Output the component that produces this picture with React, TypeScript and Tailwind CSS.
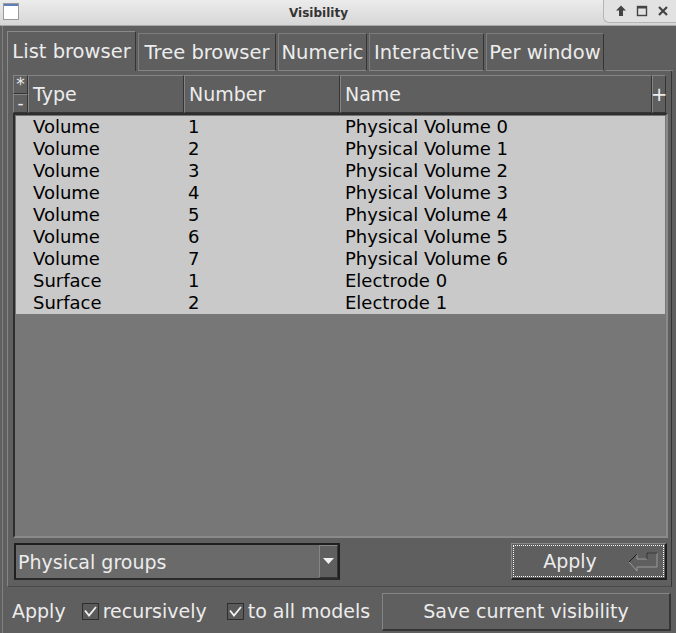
import React from "react";

const rows: [string, string, string][] = [
  ["Volume", "1", "Physical Volume 0"],
  ["Volume", "2", "Physical Volume 1"],
  ["Volume", "3", "Physical Volume 2"],
  ["Volume", "4", "Physical Volume 3"],
  ["Volume", "5", "Physical Volume 4"],
  ["Volume", "6", "Physical Volume 5"],
  ["Volume", "7", "Physical Volume 6"],
  ["Surface", "1", "Electrode 0"],
  ["Surface", "2", "Electrode 1"],
];

const tabs = [
  { label: "List browser", w: "w-[129px]" },
  { label: "Tree browser", w: "w-[138px]" },
  { label: "Numeric", w: "w-[89px]" },
  { label: "Interactive", w: "w-[115px]" },
  { label: "Per window", w: "w-[118px]" },
];

// fltk style raised box
const upBox = "border-t border-l border-[#858585] border-r border-b border-r-[#353535] border-b-[#353535]";

const Check = () => (
  <div className="shrink-0 w-[17px] h-[17px] border border-[#2e2e2e] bg-[#5a5a5a] flex items-center justify-center">
    <svg width="13" height="11" viewBox="0 0 13 11">
      <path d="M1 4.5 L5 9.5 L12 1" fill="none" stroke="#f2f2f2" strokeWidth="1.8" />
    </svg>
  </div>
);

const TitleBar = () => (
  <div className="shrink-0 h-[26px] flex items-stretch bg-gradient-to-b from-[#ececec] to-[#d6d6d6] border-b border-[#a8a8a8]">
    <div className="w-[22px] flex items-start pt-[3px] pl-[3px]">
      <div className="w-[16px] h-[17px] border border-[#9a9a9a] bg-white flex flex-col">
        <div className="h-[2px] bg-[#5d7fb8]" />
      </div>
    </div>
    <div className="flex-1 flex items-center justify-center pl-[12px] text-[12px] font-bold text-[#333]">
      Visibility
    </div>
    <div className="w-[73px] h-[23px] flex items-center justify-around pl-[6px] pr-[2px] bg-[#e2e2e2] border-l border-b border-[#b5b5b5] rounded-bl-[6px]">
      <svg width="12" height="12" viewBox="0 0 12 12">
        <path d="M6 0.5 L11 5.5 L8 5.5 L8 11 L4 11 L4 5.5 L1 5.5 Z" fill="#444" />
      </svg>
      <svg width="12" height="12" viewBox="0 0 12 12">
        <rect x="1.5" y="1.5" width="9" height="9" fill="none" stroke="#444" strokeWidth="1.4" />
        <rect x="1.5" y="1.5" width="9" height="2" fill="#444" />
      </svg>
      <svg width="12" height="12" viewBox="0 0 12 12">
        <path d="M2 2 L10 10 M10 2 L2 10" stroke="#444" strokeWidth="2.2" />
      </svg>
    </div>
  </div>
);

export default function App() {
  return (
    <div className="w-[676px] h-[633px] bg-[#5f5f5f] flex flex-col overflow-hidden font-['DejaVu_Sans',sans-serif] text-[#ececec] whitespace-nowrap">
      <TitleBar />
      <div className="flex-1 min-h-0 flex flex-col ml-[2px] border-l border-[#808080] pl-[4px] pr-[3px]">
        {/* tabs */}
        <div className="shrink-0 h-[45px] flex items-end gap-[2px] pt-[5px]">
          {tabs.map((t, i) => (
            <div
              key={t.label}
              className={
                i === 0
                  ? `${t.w} shrink-0 h-[40px] flex items-center justify-center pt-[1px] text-[19.5px] border-t border-l border-[#8a8a8a] border-r border-r-[#353535]`
                  : `${t.w} shrink-0 h-[38px] flex items-center justify-center pt-[1px] text-[19.5px] border-t border-l border-[#7c7c7c] border-r border-r-[#353535] border-b border-b-[#858585]`
              }
            >
              {t.label}
            </div>
          ))}
          <div className="flex-1 h-[1px] bg-[#858585]" />
        </div>

        {/* panel */}
        <div className="shrink-0 w-[665px] h-[516px] flex flex-col border-l border-[#858585] border-r border-r-[#353535] border-b border-b-[#4a4a4a] pl-[5px] pr-[3px] pt-[4px]">
          {/* browser */}
          <div className="w-[655px] h-[463px] flex flex-col">
            <div className="h-[38px] flex text-[19px]">
              <div className="w-[15px] flex flex-col">
                <div className={`h-[19px] ${upBox} flex items-center justify-center text-[17px] leading-none`}>*</div>
                <div className={`h-[19px] ${upBox} flex items-center justify-center text-[17px] leading-none`}>-</div>
              </div>
              <div className={`w-[156px] ${upBox} flex items-center pl-[4px]`}>Type</div>
              <div className={`w-[156px] ${upBox} flex items-center pl-[4px]`}>Number</div>
              <div className={`w-[312px] ${upBox} flex items-center pl-[4px]`}>Name</div>
              <div className={`w-[14px] ${upBox} flex items-center justify-center text-[20px]`}>+</div>
            </div>
            <div className="flex-1 flex flex-col bg-[#777777] border-t-2 border-l-2 border-[#2e2e2e] border-r-2 border-b-2 border-r-[#8a8a8a] border-b-[#8a8a8a] pt-[1px] pl-[1px] pr-[1px]">
              {rows.map((r, i) => (
                <div key={i} className="h-[22px] flex items-center bg-[#c9c9c9] text-[18px] text-black leading-none">
                  <div className="w-[172px] pl-[17px]">{r[0]}</div>
                  <div className="w-[156px]">{r[1]}</div>
                  <div className="flex-1 pl-[1px]">{r[2]}</div>
                </div>
              ))}
            </div>
          </div>

          {/* bottom controls */}
          <div className="h-[37px] mt-[5px] flex items-stretch">
            <div className="w-[326px] ml-[1px] flex border-2 border-[#1f1f1f] border-b-[#2a2a2a] bg-[#6a6a6a]">
              <div className="flex-1 flex items-center pl-[2px] pt-[1px] text-[19px]">Physical groups</div>
              <div className={`w-[19px] ${upBox} bg-[#5f5f5f] flex items-center justify-center`}>
                <svg width="11" height="7" viewBox="0 0 11 7">
                  <path d="M0 0 L11 0 L5.5 6 Z" fill="#f0f0f0" />
                </svg>
              </div>
            </div>
            <div className="flex-1" />
            <div className="w-[156px] mr-[1px] border border-[#8a8a8a] border-r-2 border-b-2 border-r-[#1f1f1f] border-b-[#1f1f1f] p-[1px]">
              <div className="h-full border border-dotted border-white flex items-center">
                <div className="flex-1 text-center text-[19px] pt-[1px] pr-[2px]">Apply</div>
                <svg width="32" height="22" viewBox="0 0 32 22" className="mr-[3px]">
                  <path d="M1 12 L9 4 L9 9 L19 9 L19 3 L29 3 L29 17 L9 17 L9 21 Z" fill="none" stroke="#9a9a9a" strokeWidth="1" />
                  <path d="M1 12 L9 4 M19 9 L19 3 L29 3" fill="none" stroke="#1c1c1c" strokeWidth="1" />
                </svg>
              </div>
            </div>
          </div>
        </div>

        {/* bottom row */}
        <div className="flex-1 min-h-0 flex items-center text-[19px] pt-[3px]">
          <span className="shrink-0 ml-[5px]">Apply</span>
          <div className="ml-[16px]"><Check /></div>
          <span className="shrink-0 ml-[4px]">recursively</span>
          <div className="ml-[20px]"><Check /></div>
          <span className="shrink-0 ml-[4px]">to all models</span>
          <div className={`ml-[12px] mr-[2px] flex-1 min-w-0 h-[38px] ${upBox} border-r-2 border-b-2 flex items-center justify-center`}>
            Save current visibility
          </div>
        </div>
      </div>
    </div>
  );
}
